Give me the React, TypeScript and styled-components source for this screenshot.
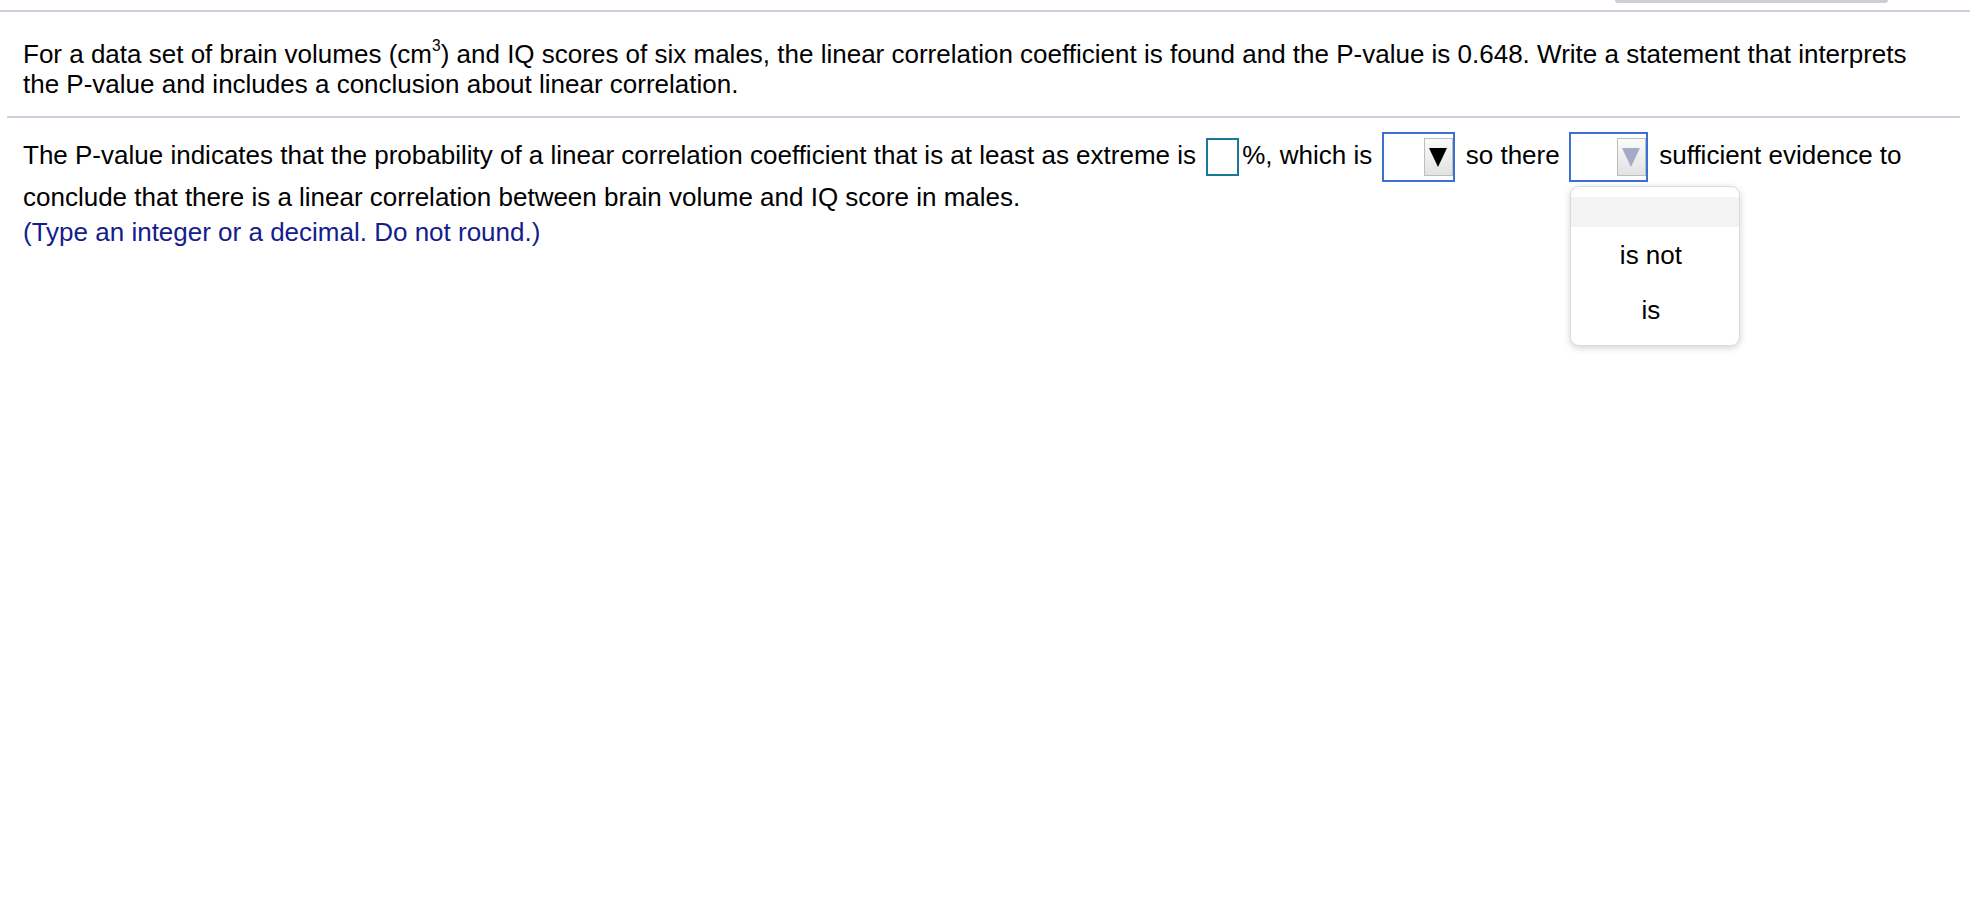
import { useState } from "react";
import styled, { createGlobalStyle } from "styled-components";

const GlobalStyle = createGlobalStyle`
  body {
    margin: 0;
    background: #fff;
    font-family: "Liberation Sans", Arial, Helvetica, sans-serif;
    color: #000;
  }
`;

const Page = styled.div`
  width: 1970px;
  min-height: 914px;
  font-size: 26px;
`;

const TopStrip = styled.div`
  height: 10px;
  display: flex;
  justify-content: flex-end;
  padding-right: 82px;
  border-bottom: 2px solid #cdd1de;
`;

const TabStub = styled.div`
  width: 273px;
  height: 3px;
  background: #cfcfcf;
  border-radius: 0 0 4px 4px;
`;

const Question = styled.p`
  margin: 27px 0 0;
  padding: 0 40px 0 23px;
  line-height: 30px;
`;

const Sup = styled.sup`
  font-size: 0.6em;
  line-height: 0;
  vertical-align: 0.75em;
`;

const Divider = styled.hr`
  margin: 17px 10px 0 7px;
  border: 0;
  border-top: 2px solid #cdd1de;
`;

const Answer = styled.div`
  margin-top: 14px;
  padding: 0 20px 0 23px;
  line-height: 30px;
`;

const Hint = styled.div`
  margin-top: 5px;
  padding-left: 23px;
  line-height: 30px;
  color: #13208c;
`;

const TextBox = styled.span`
  display: inline-block;
  vertical-align: middle;
  box-sizing: border-box;
  width: 33px;
  height: 38px;
  margin: 0 3px;
  border: 2px solid #1b7796;
  background: #fff;
`;

const SelectWrap = styled.span`
  position: relative;
  display: inline-block;
  vertical-align: middle;
  margin: 0 4px 0 2px;
`;

const SelectBox = styled.span<{ $width: number }>`
  display: flex;
  justify-content: flex-end;
  align-items: center;
  box-sizing: border-box;
  width: ${({ $width }) => $width}px;
  height: 50px;
  border: 2px solid #3b6fd1;
  background: #fff;
`;

const ArrowButton = styled.span`
  display: flex;
  align-items: center;
  justify-content: center;
  box-sizing: border-box;
  width: 29px;
  height: 38px;
  border: 1px solid #bdbdbd;
  background: linear-gradient(#fbfbfb, #e2e2e2);
`;

const Menu = styled.div`
  position: absolute;
  top: 54px;
  left: 1px;
  width: 170px;
  box-sizing: border-box;
  padding: 10px 0 8px;
  border: 1px solid #dcdcdc;
  border-radius: 9px;
  background: #fff;
  box-shadow: 0 2px 7px rgba(0, 0, 0, 0.18);
  line-height: 30px;
  z-index: 2;
`;

const Option = styled.div<{ $highlight?: boolean; $height: number }>`
  height: ${({ $height }) => $height}px;
  display: flex;
  align-items: center;
  justify-content: center;
  background: ${({ $highlight }) => ($highlight ? "#f3f3f3" : "#fff")};
  color: #000;
  padding-right: 8px;
`;

const Triangle = ({ color }: { color: string }) => (
  <svg width="18" height="20" viewBox="0 0 18 20">
    <polygon points="0,1 18,1 9,20" fill={color} />
  </svg>
);

type DropdownProps = {
  width: number;
  arrow: string;
  open?: boolean;
  options?: string[];
};

const Dropdown = ({ width, arrow, open, options = [] }: DropdownProps) => (
  <SelectWrap>
    <SelectBox $width={width}>
      <ArrowButton>
        <Triangle color={arrow} />
      </ArrowButton>
    </SelectBox>
    {open && (
      <Menu>
        <Option $highlight $height={30} />
        {options.map((o) => (
          <Option key={o} $height={55}>
            {o}
          </Option>
        ))}
      </Menu>
    )}
  </SelectWrap>
);

export default function App() {
  const [open] = useState(true);

  return (
    <Page>
      <GlobalStyle />
      <TopStrip>
        <TabStub />
      </TopStrip>
      <Question>
        For a data set of brain volumes (cm<Sup>3</Sup>) and IQ scores of six
        males, the linear correlation coefficient is found and the P-value is
        0.648. Write a statement that interprets the P-value and includes a
        conclusion about linear correlation.
      </Question>
      <Divider />
      <Answer>
        The P-value indicates that the probability of a linear correlation
        coefficient that is at least as extreme is <TextBox />%, which is{" "}
        <Dropdown width={73} arrow="#000" /> so there{" "}
        <Dropdown width={79} arrow="#a3acc4" open={open} options={["is not", "is"]} />{" "}
        sufficient evidence to conclude that there is a linear correlation
        between brain volume and IQ score in males.
      </Answer>
      <Hint>(Type an integer or a decimal. Do not round.)</Hint>
    </Page>
  );
}
